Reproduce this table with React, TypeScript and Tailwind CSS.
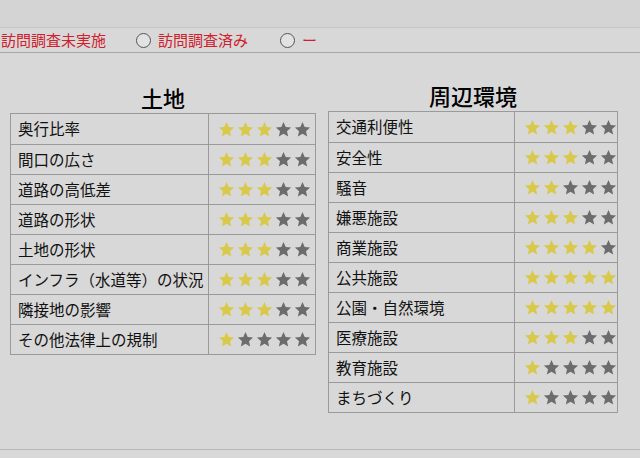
import React from 'react'

const LAND: [string, number][] = [
  ['奥行比率', 3],
  ['間口の広さ', 3],
  ['道路の高低差', 3],
  ['道路の形状', 3],
  ['土地の形状', 3],
  ['インフラ（水道等）の状況', 3],
  ['隣接地の影響', 3],
  ['その他法律上の規制', 1],
]

const AROUND: [string, number][] = [
  ['交通利便性', 3],
  ['安全性', 3],
  ['騒音', 2],
  ['嫌悪施設', 3],
  ['商業施設', 4],
  ['公共施設', 5],
  ['公園・自然環境', 5],
  ['医療施設', 3],
  ['教育施設', 1],
  ['まちづくり', 1],
]

function Star({ on }: { on: boolean }) {
  return (
    <svg width="17" height="17" viewBox="0 0 24 24" className="shrink-0">
      <path
        d="M12 1.5l3.1 7.1 7.6.7-5.8 5.1 1.7 7.6L12 18.1 5.4 22l1.7-7.6L1.3 9.3l7.6-.7z"
        fill={on ? '#d8c94a' : '#6c6c6c'}
      />
    </svg>
  )
}

function Stars({ n }: { n: number }) {
  return (
    <div className="flex items-center gap-[2px]">
      {[0, 1, 2, 3, 4].map(i => <Star key={i} on={i < n} />)}
    </div>
  )
}

function Table({ title, rows, labelW }: { title: string; rows: [string, number][]; labelW: string }) {
  return (
    <div className="flex flex-col">
      <h2 className="text-center text-[22px] leading-[28px] font-medium text-black mb-[2px]">{title}</h2>
      <div className="border border-[#9a9a9a]">
        {rows.map(([label, n], i) => (
          <div key={label} className={`flex h-[30px] ${i > 0 ? 'border-t border-[#9a9a9a]' : ''}`}>
            <div className={`${labelW} border-r border-[#9a9a9a] flex items-center pl-[7px] text-[15.5px] text-[#111] whitespace-nowrap`}>{label}</div>
            <div className="flex-1 flex items-center pl-[9px]">
              <Stars n={n} />
            </div>
          </div>
        ))}
      </div>
    </div>
  )
}

export default function App() {
  return (
    <div className="w-[640px] h-[458px] overflow-hidden bg-[#d8d8d8] font-['Noto_Sans_CJK_JP','Noto_Sans',sans-serif] flex flex-col">
      <div className="h-[28px] bg-[#d4d4d4] border-b border-[#c6c6c6]" />
      <div className="h-[25px] flex items-center border-b border-[#a8a8a8] text-[15px] text-[#d0202c] pl-[1px]">
        <span>訪問調査未実施</span>
        <span className="ml-[30px] w-[15px] h-[15px] rounded-full border-[1.5px] border-[#555] bg-[#e2e2e2]" />
        <span className="ml-[7px]">訪問調査済み</span>
        <span className="ml-[32px] w-[15px] h-[15px] rounded-full border-[1.5px] border-[#555] bg-[#e2e2e2]" />
        <span className="ml-[7px]">ー</span>
      </div>
      <div className="flex gap-[12px] pl-[10px] pt-[30px]">
        <div className="w-[306px]">
          <Table title="土地" rows={LAND} labelW="w-[198px]" />
        </div>
        <div className="w-[290px] -mt-[2px]">
          <Table title="周辺環境" rows={AROUND} labelW="w-[190px]" />
        </div>
      </div>
      <div className="mt-auto mb-[8px] border-b border-[#b8b8b8]" />
    </div>
  )
}
